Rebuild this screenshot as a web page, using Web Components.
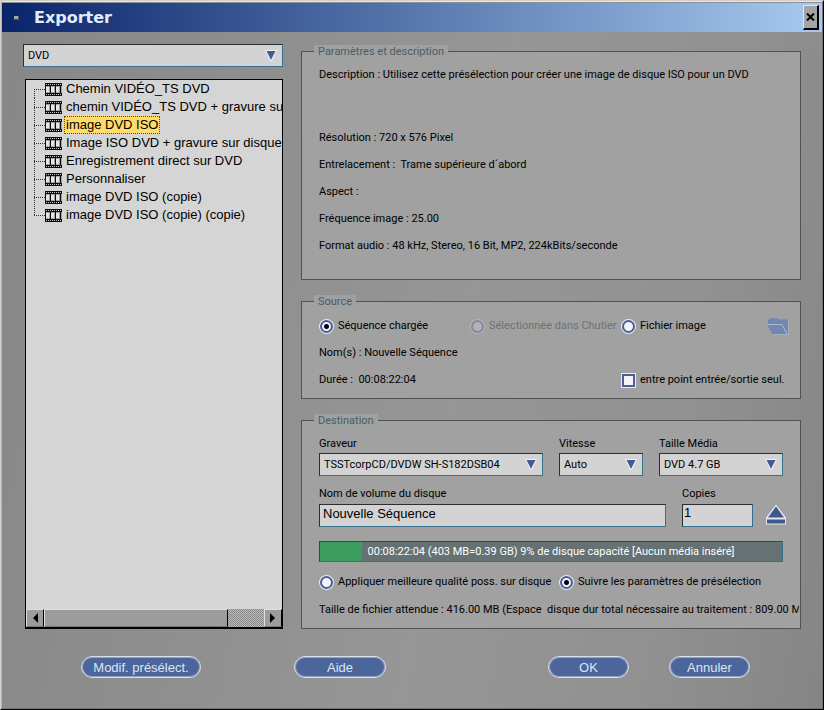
<!DOCTYPE html>
<html lang="fr">
<head>
<meta charset="utf-8">
<meta name="viewport" content="width=device-width, initial-scale=1">
<title>Exporter</title>
<style>
html, body { margin: 0; min-height: 100%; }
body { font: 11px/16px Roboto, "Liberation Sans", Arial, sans-serif; color: #000; background: #8e8e8e; }
.columns { display: grid; grid-template-columns: 260px minmax(0, 1fr); gap: 18px; flex: 1; }
.side { display: flex; flex-direction: column; gap: 12px; padding-top: 12px; }
.side preset-list { flex: 1; margin-left: 2px; }
.main { display: flex; flex-direction: column; gap: 15px; padding-top: 13px; }
.description { min-height: 63px; }
.facts { display: flex; flex-direction: column; gap: 11px; padding-bottom: 15px; }
.facts > * { min-height: 16px; white-space: pre; }
.source { display: grid; grid-template-columns: 151px 151px 1fr 16px; gap: 11px 0; padding-top: 1px; }
.source .wide { grid-column: span 2; white-space: pre; }
.source folder-icon { grid-row: 1; grid-column: 4; }
.devices { display: grid; grid-template-columns: 224fr 84fr 124fr; gap: 16px; }
.volume { display: grid; grid-template-columns: minmax(0, 1fr) 71px 14px; gap: 16px; margin-top: 10px; align-items: end; }
capacity-bar { margin-top: 14px; }
.quality { display: grid; grid-template-columns: 240px 1fr; margin-top: 12px; }
.size { margin: 12px -16px 0 0; white-space: pre; overflow: hidden; }
.actions { display: flex; gap: 40px; padding: 27px 51px 30px 58px; }
.actions .gap { margin-left: 53px; }
.actions .end { margin-left: auto; }
</style>
</head>
<body>
<export-window heading="Exporter">
  <div class="columns">
    <div class="side">
      <drop-down label="Type" value="DVD"></drop-down>
      <preset-list></preset-list>
    </div>
    <div class="main">
      <group-box legend="Paramètres et description">
        <div class="description">Description : Utilisez cette présélection pour créer une image de disque ISO pour un DVD</div>
        <div class="facts">
          <span>Résolution : 720 x 576 Pixel</span>
          <span>Entrelacement :  Trame supérieure d´abord</span>
          <span>Aspect :</span>
          <span>Fréquence image : 25.00</span>
          <span>Format audio : 48 kHz, Stereo, 16 Bit, MP2, 224kBits/seconde</span>
        </div>
      </group-box>
      <group-box legend="Source">
        <div class="source">
          <choice-input checked>Séquence chargée</choice-input>
          <choice-input disabled>Sélectionnée dans Chutier</choice-input>
          <choice-input>Fichier image</choice-input>
          <folder-icon></folder-icon>
          <span class="wide">Nom(s) : Nouvelle Séquence</span><span class="wide"></span>
          <span class="wide">Durée :  00:08:22:04</span>
          <choice-input class="wide" type="checkbox">entre point entrée/sortie seul.</choice-input>
        </div>
      </group-box>
      <group-box legend="Destination">
        <div class="devices">
          <drop-down caption="Graveur" value="TSSTcorpCD/DVDW SH-S182DSB04"></drop-down>
          <drop-down caption="Vitesse" value="Auto"></drop-down>
          <drop-down caption="Taille Média" value="DVD 4.7 GB"></drop-down>
        </div>
        <div class="volume">
          <text-field caption="Nom de volume du disque" value="Nouvelle Séquence"></text-field>
          <text-field caption="Copies" value="1" compact></text-field>
          <eject-button></eject-button>
        </div>
        <capacity-bar percent="9">00:08:22:04 (403 MB=0.39 GB) 9% de disque capacité [Aucun média inséré]</capacity-bar>
        <div class="quality">
          <choice-input>Appliquer meilleure qualité poss. sur disque</choice-input>
          <choice-input checked>Suivre les paramètres de présélection</choice-input>
        </div>
        <div class="size">Taille de fichier attendue : 416.00 MB (Espace  disque dur total nécessaire au traitement : 809.00 M</div>
      </group-box>
    </div>
  </div>
  <div class="actions">
    <pill-button style="--w:120px">Modif. présélect.</pill-button>
    <pill-button class="gap" style="--w:92px">Aide</pill-button>
    <pill-button class="end" style="--w:81px">OK</pill-button>
    <pill-button style="--w:81px">Annuler</pill-button>
  </div>
</export-window>

<script>
class Base extends HTMLElement {
  connectedCallback() {
    if (this.shadowRoot) return;
    this.attachShadow({ mode: 'open' }).innerHTML =
      '<style>*{box-sizing:border-box}button,input,select{font:inherit;color:inherit;margin:0}' + this.css() + '</style>' + this.html();
  }
  attr(name) { return this.getAttribute(name) || ''; }
}

customElements.define('export-window', class extends Base {
  css() { return `
    :host { display: flex; flex-direction: column; min-height: 100vh; box-sizing: border-box;
      border: 1px solid; border-color: #d4d0c8 #000 #000 #d4d0c8; 
      background: linear-gradient(100deg, #878787 0%, #8c8c8c 20%, #969696 55%, #919191 80%, #858585 100%); }
    .frame { flex: 1; display: flex; flex-direction: column; border: 1px solid; border-color: #e8e6e0 #74767c #74767c #b4b4b4; }
    header { display: flex; align-items: center; height: 30px; padding: 0 3px 0 12px; 
      background: linear-gradient(90deg, #0a246a, #a6caf0); border-top: 1px solid #8a9098; }
    i { width: 5px; height: 4px; background: #a3a596; border: solid #4b5668; border-width: 0 1px 1px 0; }
    h1 { flex: 1; margin: 0 0 0 15px; font: bold 16px/28px "DejaVu Sans", Verdana, sans-serif; color: #e2ecfb; }
    header button { width: 16px; height: 25px; padding: 0; display: grid; place-items: center; background: #a3a3a3;
      border: solid; border-width: 1px 2px 2px 1px; border-color: #e4e4e4 #000 #000 #e4e4e4; }
    .body { flex: 1; display: flex; flex-direction: column; padding: 0 21px; }`; }
  html() { return `<div class="frame"><header><i></i><h1>${this.attr('heading')}</h1>
    <button aria-label="Fermer"><svg width="9" height="8" viewBox="0 0 9 8"><path d="M1 .5 8 7.5M8 .5 1 7.5" stroke="#000" stroke-width="2"/></svg></button></header>
    <div class="body"><slot></slot></div></div>`; }
});

customElements.define('group-box', class extends Base {
  css() { return `
    :host { display: block; }
    fieldset { margin: 0; min-width: 0; border: 1px solid #4e5354; background: #a1a1a1; padding: 9px 17px 10px; }
    legend { margin-left: -5px; padding: 0 4px; line-height: 13px; color: #505c62; background: #9da1a2; }`; }
  html() { return `<fieldset><legend>${this.attr('legend')}</legend><slot></slot></fieldset>`; }
});

customElements.define('drop-down', class extends Base {
  css() { return `
    :host { display: block; min-width: 0; }
    label { display: block; padding-bottom: 1px; }
    .box { display: grid; align-items: center; }
    .box > * { grid-area: 1 / 1; }
    select { appearance: none; width: 100%; height: 23px; padding: 0 24px 0 4px; border: 1px solid; border-radius: 0;
      border-color: #2a2f33 #35708c #35708c #2a2f33; background: #d3d3d3; color: #000; }
    svg { justify-self: end; margin-right: 5px; pointer-events: none; }`; }
  html() {
    const c = this.attr('caption');
    return `${c ? `<label for="s">${c}</label>` : ''}<div class="box"><select id="s" ${c ? '' : `aria-label="${this.attr('label')}"`}><option>${this.attr('value')}</option></select>
    <svg width="14" height="13" viewBox="0 0 14 13"><path d="M1 1H13L8 12H6Z" fill="#eef0f4"/><path d="M2.500 2H11.500L7 11Z" fill="#435a96"/></svg></div>`;
  }
});

customElements.define('text-field', class extends Base {
  css() { return `
    :host { display: block; min-width: 0; }
    label { display: block; padding-bottom: 2px; }
    input { display: block; width: 100%; height: 23px; padding: 0 3px 4px; font: 13px "Liberation Sans", Arial, sans-serif; border: 1px solid; border-radius: 0;
      border-color: #2a2f33 #35708c #35708c #2a2f33; background: #d3d3d3; color: #000; }
    :host([compact]) input { padding: 0 1px 6px; }`; }
  html() { return `<label for="t">${this.attr('caption')}</label><input id="t" type="text" value="${this.attr('value')}">`; }
});

customElements.define('choice-input', class extends Base {
  css() { return `
    :host { display: block; white-space: nowrap; }
    label { display: flex; align-items: center; gap: 4px; }
    input { appearance: none; flex: none; width: 15px; height: 15px; background: #e9ecf2; display: grid; place-items: center; }
    input::before { content: ""; width: 13px; height: 13px; box-sizing: border-box; border: 2px solid #4a5f98; background: #f4f5f9; }
    input[type=radio], input[type=radio]::before { border-radius: 50%; }
    input:checked::before { background: radial-gradient(circle, #000 2px, #f4f5f9 3px); }
    :host([disabled]) { color: #707070; }
    :host([disabled]) input { background: #b4b6bc; }
    :host([disabled]) input::before { border-color: #8587a0; background: #b2b2b4; }`; }
  html() {
    const t = this.attr('type') || 'radio';
    return `<label><input type="${t}" ${this.hasAttribute('checked') ? 'checked' : ''} ${this.hasAttribute('disabled') ? 'disabled' : ''}><span><slot></slot></span></label>`;
  }
});

customElements.define('folder-icon', class extends Base {
  css() { return `:host { display: block; height: 16px; } button { display: block; padding: 0; border: 0; background: none; } svg { display: block; overflow: visible; }`; }
  html() { return `<button aria-label="Parcourir"><svg width="22" height="18" viewBox="0 0 22 18">
    <path d="M1 2 4 0H10L12 1.500H21V16H5L1 8Z" fill="#7288b0"/><path d="M1 6.500H15L20 16" fill="none" stroke="#a9b8cf"/><path d="M21.500 2V16.500H5" fill="none" stroke="#a5adba"/></svg></button>`; }
});

customElements.define('eject-button', class extends Base {
  css() { return `:host { display: flex; justify-content: center; height: 23px; } button { flex: none; align-self: start; padding: 0; border: 0; background: none; } svg { display: block; }`; }
  html() { return `<button aria-label="Éjecter"><svg width="20" height="21" viewBox="0 0 20 20">
    <path d="M10 0 20 13V20H0V13Z" fill="#e6e8ee"/><path d="M10 2 18 13H2Z" fill="#40578f"/><path d="M1 15H19V19H1Z" fill="#40578f"/></svg></button>`; }
});

customElements.define('capacity-bar', class extends Base {
  css() { return `
    :host { display: grid; align-items: center; height: 21px; box-sizing: border-box; border: 1px solid; border-color: #39464a #35708c #35708c #39464a;
      background: #657173; color: #fff; text-align: center; }
    div, span { grid-area: 1 / 1; }
    div { width: 9%; height: 100%; background: #3d9d5f; }
    span { white-space: nowrap; }`; }
  html() { return `<div role="progressbar" aria-valuenow="${this.attr('percent')}" aria-valuemin="0" aria-valuemax="100" aria-label="Capacité"></div><span><slot></slot></span>`; }
});

customElements.define('pill-button', class extends Base {
  css() { return `
    :host { display: block; }
    button { display: block; width: var(--w); height: 22px; padding: 1px 0 0; font: 13px/18px "Liberation Sans", Arial, sans-serif; color: #dbe5f6;
      background: #4c659b; border: 1px solid #d9dee8; box-shadow: inset 0 0 0 1px #93a2c4; border-radius: 11px; white-space: nowrap; }`; }
  html() { return `<button><slot></slot></button>`; }
});

customElements.define('preset-list', class extends Base {
  css() { return `
    :host { display: flex; flex-direction: column; box-sizing: border-box; min-width: 0; border: 1px solid #000; border-bottom-width: 2px; background: #d5d5d5; font: 13px "Liberation Sans", Arial, sans-serif; }
    ul { flex: 1; margin: 0; padding: 0 0 0 8px; list-style: none; overflow: hidden; }
    li { display: flex; align-items: center; height: 18px; 
      background: repeating-linear-gradient(#333 0 1px, transparent 1px 2px) 0 0 / 1px 100% no-repeat,
        repeating-linear-gradient(90deg, #333 0 1px, transparent 1px 2px) 0 9px / 11px 1px no-repeat; }
    li:first-child { background-position: 0 9px, 0 9px; }
    li:last-child { background-size: 1px 9px, 11px 1px; }
    svg { flex: none; margin: 0 2px 0 11px; }
    li button { flex: none; height: 18px; padding: 0 1px; border: 1px solid transparent; background: none; white-space: nowrap; line-height: 16px; }
    li button[aria-pressed=true] { background: #ffdb6a; border: 1px dotted #5a4a10; }
    .bar { display: grid; grid-template-columns: 18px 184px 1fr 18px; height: 18px; }
    .bar > * { border: 1px solid; border-color: #e0e0e0 #000 #777 #e0e0e0; background: #9c9c9c; padding: 0; display: grid; place-items: center; }
    .bar .track { border: 0; background: repeating-conic-gradient(#888 0 25%, #bbb 0 50%) 0 0 / 2px 2px; }
    .bar svg { margin: 0; }`; }
  html() {
    const items = ['Chemin VIDÉO_TS DVD', 'chemin VIDÉO_TS DVD + gravure su', 'image DVD ISO', 'Image ISO DVD + gravure sur disque',
      'Enregistrement direct sur DVD', 'Personnaliser', 'image DVD ISO (copie)', 'image DVD ISO (copie) (copie)'];
    const film = `<svg width="17" height="13" viewBox="0 0 17 13"><path d="M0 0H17V13H0Z" fill="#0c0c0c"/>
      <path d="M1 1.500H17M1 11.500H17" stroke="#ccc" stroke-dasharray="1 1"/>
      <path d="M1 3H5V10H1ZM6 3H10V10H6ZM11 3H15V10H11ZM16 3H17V10H16Z" fill="#a2a2a2"/><path d="M1 4H4V9H1ZM6 4H9V9H6ZM11 4H14V9H11Z" fill="#e6e6e6"/></svg>`;
    return `<ul>${items.map((t, i) => `<li>${film}<button aria-pressed="${i === 2}">${t}</button></li>`).join('')}</ul>
      <div class="bar"><button aria-label="Défiler à gauche"><svg width="6" height="10"><path d="M6 0V10L1 5Z"/></svg></button><div></div><div class="track"></div>
      <button aria-label="Défiler à droite"><svg width="6" height="10"><path d="M0 0V10L5 5Z"/></svg></button></div>`;
  }
});
</script>
</body>
</html>
